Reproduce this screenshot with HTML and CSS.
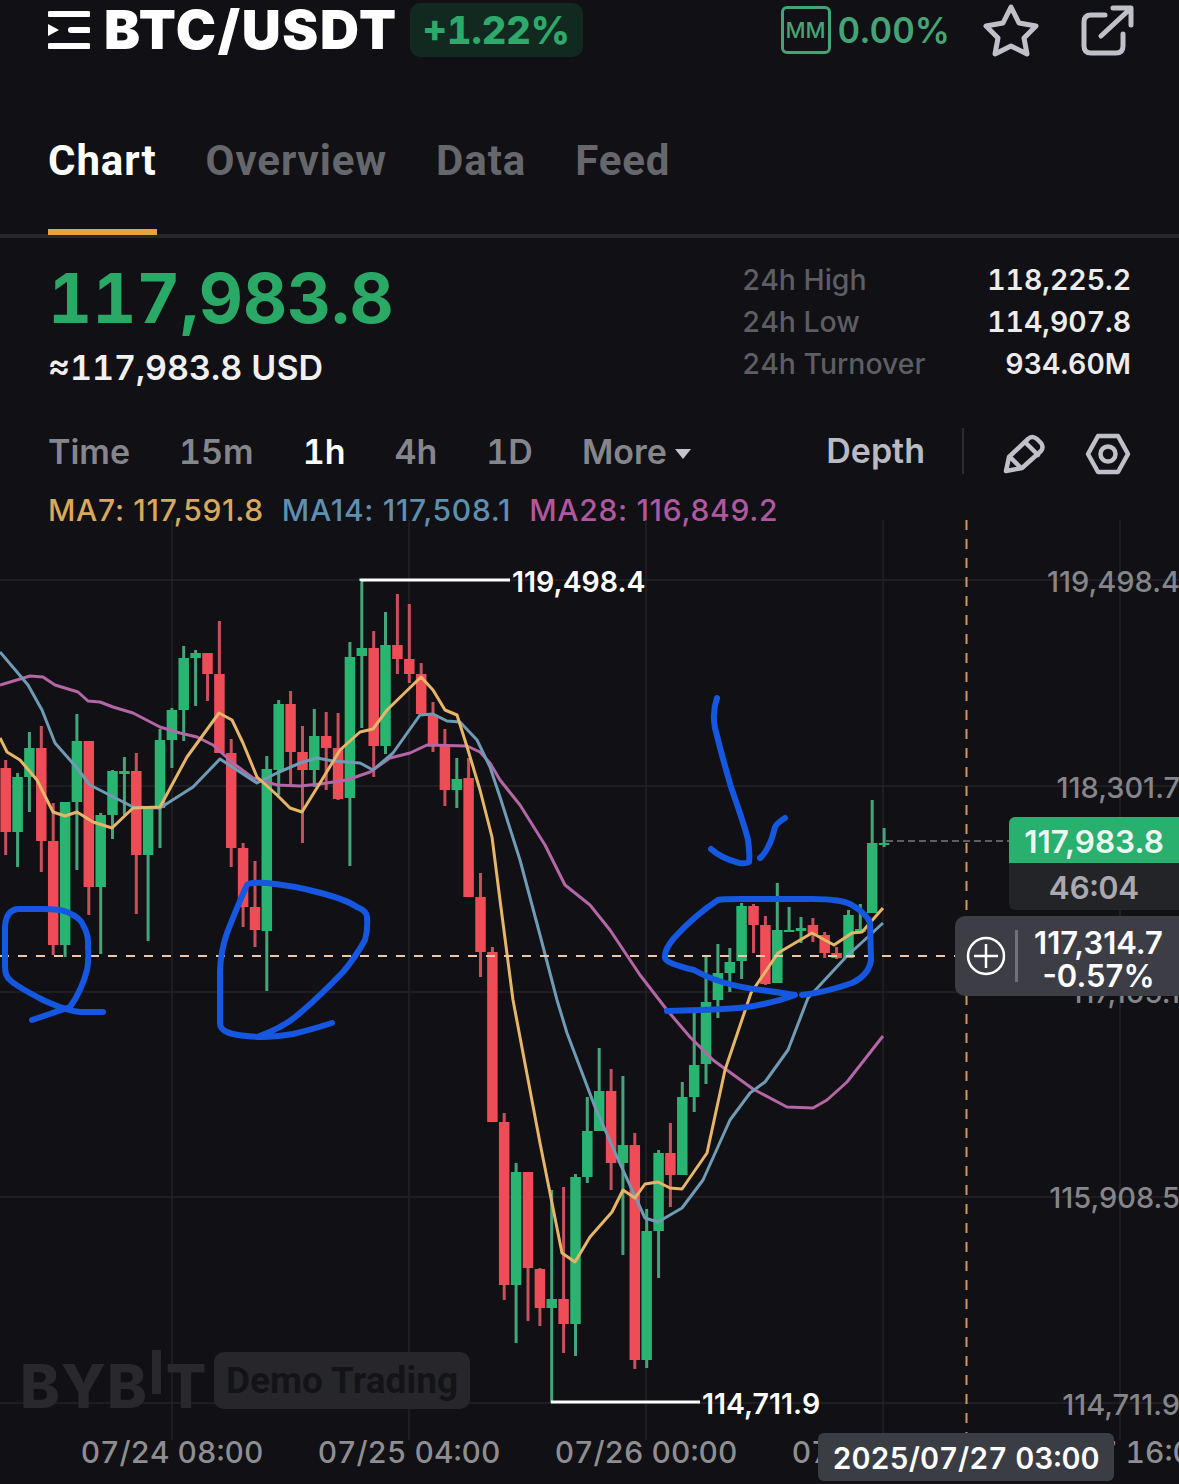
FILE: index.html
```html
<!DOCTYPE html>
<html lang="en">
<head>
  <meta charset="utf-8" />
  <title>BTC/USDT</title>
  <link rel="stylesheet" href="styles.css">
</head>
<body>
  <div id="main-body">

    <header class="top">
      <svg class="menu" viewBox="0 0 42 38"><path d="M2 0H40a2.500 2.500 0 0 1 0 6H2a2.500 2.500 0 0 1 0-6ZM23 16H40a2.500 2.500 0 0 1 0 6H23a2.500 2.500 0 0 1 0-6ZM2 32H40a2.500 2.500 0 0 1 0 6H2a2.500 2.500 0 0 1 0-6ZM0 13L11 19L0 25Z" /></svg>
      <h1>BTC/USDT</h1>
      <span class="change">+1.22%</span>
      <span class="mm">MM</span>
      <span class="mm-val">0.00%</span>
      <svg class="ico star" viewBox="983 2 56 54"><path d="M1011 6L1019 22L1036 25L1024 37L1027 53L1011 45L995 53L998 37L986 25L1003 22Z" /></svg>
      <svg class="ico share" viewBox="1081 4 54 53"><path d="M1105 15H1091Q1084 15 1084 22V46Q1084 53 1091 53H1116Q1123 53 1123 46V34M1101 36L1130 9M1113 8H1131V25" /></svg>
    </header>

    <nav class="tabs">
      <a class="on">Chart</a>
      <a>Overview</a>
      <a>Data</a>
      <a>Feed</a>
    </nav>

    <section class="stats">
      <div class="last">
        <div class="price">117,983.8</div>
        <div class="usd">≈117,983.8 USD</div>
      </div>
      <dl>
        <dt>24h High</dt><dd>118,225.2</dd>
        <dt>24h Low</dt><dd>114,907.8</dd>
        <dt>24h Turnover</dt><dd>934.60M</dd>
      </dl>
    </section>

    <div class="bar">
      <span>Time</span>
      <span>15m</span>
      <span class="cur">1h</span>
      <span>4h</span>
      <span>1D</span>
      <span class="more">More<i></i></span>
      <span class="depth">Depth</span>
      <svg class="ico pen" viewBox="1002 435 44 40"><path d="M1005 472L1008 458L1027 440Q1031 436 1036 440L1040 444Q1043 448 1040 452L1021 469ZM1024 443L1037 456M1009 458L1020 469" /></svg>
      <svg class="ico hex" viewBox="1084 434 46 42"><path d="M1087 455L1097 437H1117L1127 455L1117 473H1097Z" /><circle cx="1107" cy="455" r="7.500" /></svg>
    </div>

    <div class="ma">
      <span class="ma7">MA7: 117,591.8</span>
      <span class="ma14">MA14: 117,508.1</span>
      <span class="ma28">MA28: 116,849.2</span>
    </div>

    <div class="chart">
      <svg class="plot" viewBox="0 520 1179 964">
        <path class="grid" d="M0 580H1179M0 786H1179M0 992H1179M0 1197H1179M0 1403H1179M172 520V1440M409 520V1440M646 520V1440M883 520V1440M1120 520V1440" />

        <text class="mark" x="20" y="1408">BYB<tspan class="mark-i" dy="-14">I</tspan><tspan dy="14">T</tspan></text>

        <path class="wick-g" d="M17.600 773V867M29.400 732V812M65.100 802V957M76.900 714V870M100.700 813V954M112.500 770V839M124.400 757V815M148.100 808V941M160 729V848M171.900 708V768M183.700 646V741M195.600 650V706M266.800 756V991M278.700 700V795M314.300 709V787M349.900 642V866M361.800 581V728M385.500 612V754M456.800 758V808M516.100 1163V1343M551.700 1190V1403M575.500 1174V1356M587.300 1097V1183M599.200 1048V1131M622.900 1076V1255M646.700 1209V1368M658.600 1150V1278M682.300 1082V1175M694.200 1010V1112M706 957V1084M717.900 944V1018M729.800 948V992M741.600 903V979M777.300 883V983M789.100 907V932M801 917V943M848.500 910V958M860.300 904V933M872.200 800V913M884.100 828V847" />
        <path class="wick-r" d="M5.700 760V855M41.300 726V872M53.200 803V955M88.800 741V915M136.300 753V914M207.500 653V701M219.400 621V753M231.200 739V867M243.100 843V927M255 861V947M290.600 691V787M302.500 726V843M326.200 712V790M338.100 713V800M373.700 631V777M397.400 594V674M409.300 604V683M421.200 663V714M433 702V752M444.900 729V806M468.600 758V897M480.500 873V977M492.400 947V1122M504.200 1113V1300M528 1172V1321M539.900 1268V1326M563.600 1187V1353M611.100 1069V1190M634.800 1133V1369M670.400 1123V1207M753.500 904V953M765.400 916V985M812.900 918V942M824.700 932V958M836.600 947V959" />
        <path class="body-g" d="M17.600 777V832M29.400 748V777M65.100 802V945M76.900 741V802M100.700 815V887M112.500 771V815M124.400 771V774M148.100 808V855M160 740V808M171.900 710V740M183.700 658V710M195.600 653V658M266.800 769V931M278.700 704V770M314.300 736V770M349.900 657V798M361.800 648V656M385.500 645V746M456.800 779V790M516.100 1172V1285M551.700 1299V1308M575.500 1177V1324M587.300 1131V1177M599.200 1091V1131M622.900 1145V1163M646.700 1231V1360M658.600 1153V1231M682.300 1097V1175M694.200 1065V1097M706 1002V1064M717.900 973V1000M729.800 962V973M741.600 906V961M777.300 930V983M789.100 930V932M801 928V931M848.500 915V958M860.300 929V932M872.200 843V913M884.100 843V845" />
        <path class="body-r" d="M5.700 768V832M41.300 748V841M53.200 841V945M88.800 741V887M136.300 771V855M207.500 653V674M219.400 674V753M231.200 753V848M243.100 848V907M255 907V930M290.600 704V752M302.500 752V770M326.200 736V748M338.100 748V799M373.700 648V746M397.400 645V659M409.300 659V674M421.200 674V714M433 715V745M444.900 746V790M468.600 778V897M480.500 897V952M492.400 952V1122M504.200 1122V1285M528 1172V1268M539.900 1269V1308M563.600 1299V1324M611.100 1091V1163M634.800 1145V1360M670.400 1153V1175M753.500 906V925M765.400 925V984M812.900 925V935M824.700 935V953M836.600 953V958" />

        <polyline class="line ma28-l" points="0,685 30,676 43,677 55,685 78,692 88,701 100,702 113,707 133,713 160,727 180,733 197,737 213,745 233,763 253,778 277,785 300,786 320,784 347,780 370,772 390,758 410,753 427,745 467,746 480,752 490,763 500,780 520,805 545,845 565,885 590,905 610,930 640,975 667,1010 690,1037 713,1060 753,1089 787,1107 813,1108 827,1100 847,1082 883,1036" />
        <polyline class="line ma14-l" points="0,652 28,685 42,710 55,743 77,768 90,785 133,807 160,808 193,787 220,759 257,783 277,773 300,763 317,758 333,761 360,763 373,770 393,753 420,715 433,714 447,721 460,722 477,740 490,767 500,797 520,860 540,935 557,1000 567,1033 595,1107 617,1157 645,1218 658,1222 682,1208 703,1180 730,1120 750,1093 765,1082 788,1050 808,998 846,957 883,923" />
        <polyline class="line ma7-l" points="0,738 7,752 20,760 37,780 53,812 65,816 77,812 93,822 112,828 133,808 160,807 187,757 219,713 232,720 243,743 257,777 277,795 290,808 302,812 320,783 340,750 360,732 373,729 387,710 421,677 433,690 445,710 457,715 468,750 480,790 492,837 500,900 513,1000 540,1143 562,1253 575,1262 590,1237 612,1212 623,1190 635,1198 645,1184 658,1182 670,1188 682,1189 707,1153 725,1070 751,993 778,953 812,933 834,945 852,933 862,932 883,908" />

        <path class="hi" d="M361 581V580H510M551 1402H700" />
        <path class="cross-h" d="M0 956H955" />
        <path class="cross-v" d="M966.500 520V1484" />
        <path class="now" d="M886 841H1010" />

        <path class="pen-l" d="M103 1012L80 1012Q67 1011 43 1000Q16 986 10 980Q5 976 5 967L5 927Q6 910 18 909L43 909Q60 909 67 912Q81 918 83 925Q89 935 88 947Q89 960 87 970Q82 990 70 1007L32 1020" />
        <path class="pen-l" d="M332 1023Q310 1030 293 1034Q275 1037 260 1037Q235 1036 227 1032Q220 1029 220 1023L220 970Q221 950 227 933Q240 900 247 885Q250 882 267 883Q295 886 317 892Q345 899 357 907Q367 911 367 917Q368 930 365 940Q355 958 343 972Q320 996 300 1013Q285 1027 257 1037" />
        <path class="pen-l" d="M717 698Q712 712 715 728Q723 760 731 787Q746 830 748 840Q750 855 749 862Q746 864 739 863Q721 858 711 849" />
        <path class="pen-l" d="M785 818Q777 823 775 827Q772 840 768 847Q764 855 760 858" />
        <path class="pen-l" d="M667 1011L700 1010Q730 1009 748 1007Q777 1002 795 995Q777 992 761 990Q720 985 694 970Q665 963 665 958Q664 950 674 938Q695 915 718 900Q722 899 740 899L812 899Q842 899 852 905Q868 915 870 923L871 960Q869 975 852 983Q827 992 802 995" />

        <text class="ax" x="1180" y="592">119,498.4</text>
        <text class="ax" x="1180" y="798">118,301.7</text>
        <text class="ax" x="1180" y="1003">117,105.1</text>
        <text class="ax" x="1180" y="1208">115,908.5</text>
        <text class="ax" x="1180" y="1415">114,711.9</text>
        <text class="ext" x="512" y="592">119,498.4</text>
        <text class="ext" x="702" y="1414">114,711.9</text>
        <text class="tm" x="172" y="1463">07/24 08:00</text>
        <text class="tm" x="409" y="1463">07/25 04:00</text>
        <text class="tm" x="646" y="1463">07/26 00:00</text>
        <text class="tm" x="883" y="1463">07/26 20:00</text>
        <text class="tm" x="1120" y="1463">07/27 16:00</text>
      </svg>

      <div class="badge">Demo Trading</div>

      <div class="tag">
        <div class="tag-price">117,983.8</div>
        <div class="tag-time">46:04</div>
      </div>

      <div class="pop">
        <svg class="plus" viewBox="0 0 40 40"><circle cx="20" cy="20" r="18" /><path d="M20 8V32M8 20H32" /></svg>
        <div class="pop-txt">
          <div>117,314.7</div>
          <div>-0.57%</div>
        </div>
      </div>

      <div class="stamp">2025/07/27 03:00</div>
    </div>

  </div>
</body>
</html>
```

FILE: styles.css
```css
html, body { margin: 0; padding: 0; background: #111014; font-family: "Inter", "Liberation Sans", sans-serif; font-variant-numeric: tabular-nums; color: #fff; }
#main-body { width: 1179px; height: 1484px; overflow: hidden; display: flex; flex-direction: column; }
h1 { margin: 0; flex: none; font-size: 54px; line-height: 60px; font-weight: 900; letter-spacing: 1.700px; white-space: nowrap; }

.top { height: 60px; display: flex; align-items: center; padding: 0 44px 0 48px; flex: none; }
.menu { width: 42px; height: 38px; fill: #fff; margin-right: 14px; flex: none; }
.change { margin-left: 12px; width: 173px; height: 54px; line-height: 54px; background: #12291f; border-radius: 10px; color: #2ca96b; font-size: 38px; font-weight: 800; text-align: center; flex: none; }
.mm { margin-left: auto; width: 44px; height: 42px; line-height: 42px; border: 3px solid #45a476; border-radius: 6px; color: #45a476; font-size: 22px; font-weight: 500; text-align: center; }
.mm-val { margin-left: 7px; color: #45a476; font-size: 35px; font-weight: 600; }
.ico { fill: none; stroke: #bfc0c9; stroke-width: 5; stroke-linejoin: round; stroke-linecap: round; flex: none; }
.star { width: 56px; height: 54px; margin-left: 33px; }
.share { width: 54px; height: 53px; margin-left: 42px; }

.tabs { height: 178px; box-sizing: border-box; padding: 60px 0 0 48px; display: flex; gap: 49px; border-bottom: 4px solid #26262b; flex: none; font-family: "Roboto", "Liberation Sans", sans-serif; }
.tabs a { height: 114px; box-sizing: border-box; padding-top: 16px; font-size: 42px; line-height: 50px; font-weight: 700; letter-spacing: 0.900px; color: #66676c; }
.tabs a.on { color: #fff; border-bottom: 6px solid #e5a33d; height: 115px; }

.stats { height: 182px; box-sizing: border-box; padding: 21px 48px 0; display: flex; justify-content: space-between; flex: none; }
.price { margin-top: 3px; font-size: 68.300px; line-height: 72px; font-weight: 700; color: #2aa866; }
.usd { margin-top: 14px; font-size: 34px; line-height: 40px; font-weight: 600; color: #f0f0f0; }
dl { margin: 0; display: grid; grid-template-columns: auto 205px; grid-auto-rows: 42px; width: 389px; font-size: 28.400px; line-height: 42px; }
dt { color: #5d5e63; font-weight: 500; white-space: nowrap; }
dd { margin: 0; color: #ececec; font-weight: 600; text-align: right; }

.bar { height: 62px; display: flex; align-items: center; gap: 49px; padding: 0 48px; font-size: 34px; font-weight: 600; color: #85868c; flex: none; }
.bar .cur { color: #fff; }
.more i { display: inline-block; margin-left: 8px; border: 8px solid transparent; border-top: 10px solid #c4c5cc; border-bottom: 0; vertical-align: middle; }
.bar .depth { margin-left: auto; padding-right: 37px; border-right: 2px solid #2c2c31; line-height: 46px; color: #b9bac4; }
.pen { width: 44px; height: 40px; margin: 6px 0 0 -10px; stroke-width: 4.500; }
.hex { width: 46px; height: 42px; margin: 6px 0 0 -11px; stroke-width: 4.500; }

.ma { height: 20px; margin-top: 18px; display: flex; align-items: center; gap: 18px; padding-left: 48px; font-size: 30px; font-weight: 500; font-variant-numeric: normal; letter-spacing: 0.700px; flex: none; }
.ma7 { color: #d9a85b; }
.ma14 { color: #5f8fb0; }
.ma28 { color: #b0589f; }

.chart { position: relative; flex: none; width: 1179px; height: 964px; }
.plot { display: block; width: 1179px; height: 964px; fill: none; }
.grid { stroke: #232327; stroke-width: 1.500; }
.wick-g { stroke: #45a578; stroke-width: 3; }
.wick-r { stroke: #c94f5c; stroke-width: 3; }
.body-g { stroke: #2ab472; stroke-width: 10.500; }
.body-r { stroke: #ee4c57; stroke-width: 10.500; }
.line { fill: none; stroke-width: 3; stroke-linejoin: round; }
.ma7-l { stroke: #e6b568; }
.ma14-l { stroke: #6f9bb5; }
.ma28-l { stroke: #b466a6; }
.hi { stroke: #fff; stroke-width: 3; }
.cross-h { stroke: #efc6a3; stroke-width: 2; stroke-dasharray: 9 9; }
.cross-v { stroke: #d8935a; stroke-width: 2; stroke-dasharray: 10 9; }
.now { stroke: #77787d; stroke-width: 1.500; stroke-dasharray: 7 4; }
.pen-l { fill: none; stroke: #1557e0; stroke-width: 6; stroke-linecap: round; stroke-linejoin: round; }

.mark { fill: #29292d; font-size: 60px; font-weight: 800; letter-spacing: 1px; }
.mark-i { font-weight: 700; }
.ax { fill: #85858a; font-size: 29px; font-weight: 500; font-variant-numeric: normal; text-anchor: end; }
.ext { fill: #fff; font-size: 28.500px; font-weight: 600; font-variant-numeric: normal; }
.tm { fill: #8e8e92; font-size: 30px; font-weight: 500; text-anchor: middle; }

.badge { position: absolute; left: 214px; top: 832px; width: 256px; height: 57px; line-height: 57px; background: #27272b; border-radius: 10px; color: #141418; font-family: "Roboto", "Liberation Sans", sans-serif; font-size: 37px; font-weight: 700; text-align: center; }
.tag { position: absolute; left: 1009px; top: 297px; width: 170px; text-align: center; font-size: 31.500px; font-weight: 600; }
.tag-price { height: 46px; line-height: 49px; background: #2ab06e; border-radius: 6px 0 0 0; color: #eef8f2; font-variant-numeric: normal; }
.tag-time { height: 47px; line-height: 49px; background: #232427; border-radius: 0 0 0 6px; color: #a9aab0; }
.pop { position: absolute; left: 955px; top: 396px; width: 224px; height: 80px; box-sizing: border-box; padding-left: 11px; display: flex; align-items: center; background: #3d3e45; border-radius: 10px 0 0 10px; }
.plus { width: 40px; height: 40px; fill: none; stroke: #fff; stroke-width: 2.500; flex: none; }
.pop-txt { margin-left: 9px; flex: 1; box-sizing: border-box; border-left: 3px solid #707178; padding-top: 6px; font-size: 31px; line-height: 33px; font-weight: 600; font-variant-numeric: normal; text-align: center; height: 52px; display: flex; flex-direction: column; justify-content: center; }
.stamp { position: absolute; left: 818px; top: 913px; width: 296px; height: 48px; line-height: 50px; background: #3b3d44; border-radius: 6px; font-size: 29.500px; font-weight: 600; text-align: center; }
```
